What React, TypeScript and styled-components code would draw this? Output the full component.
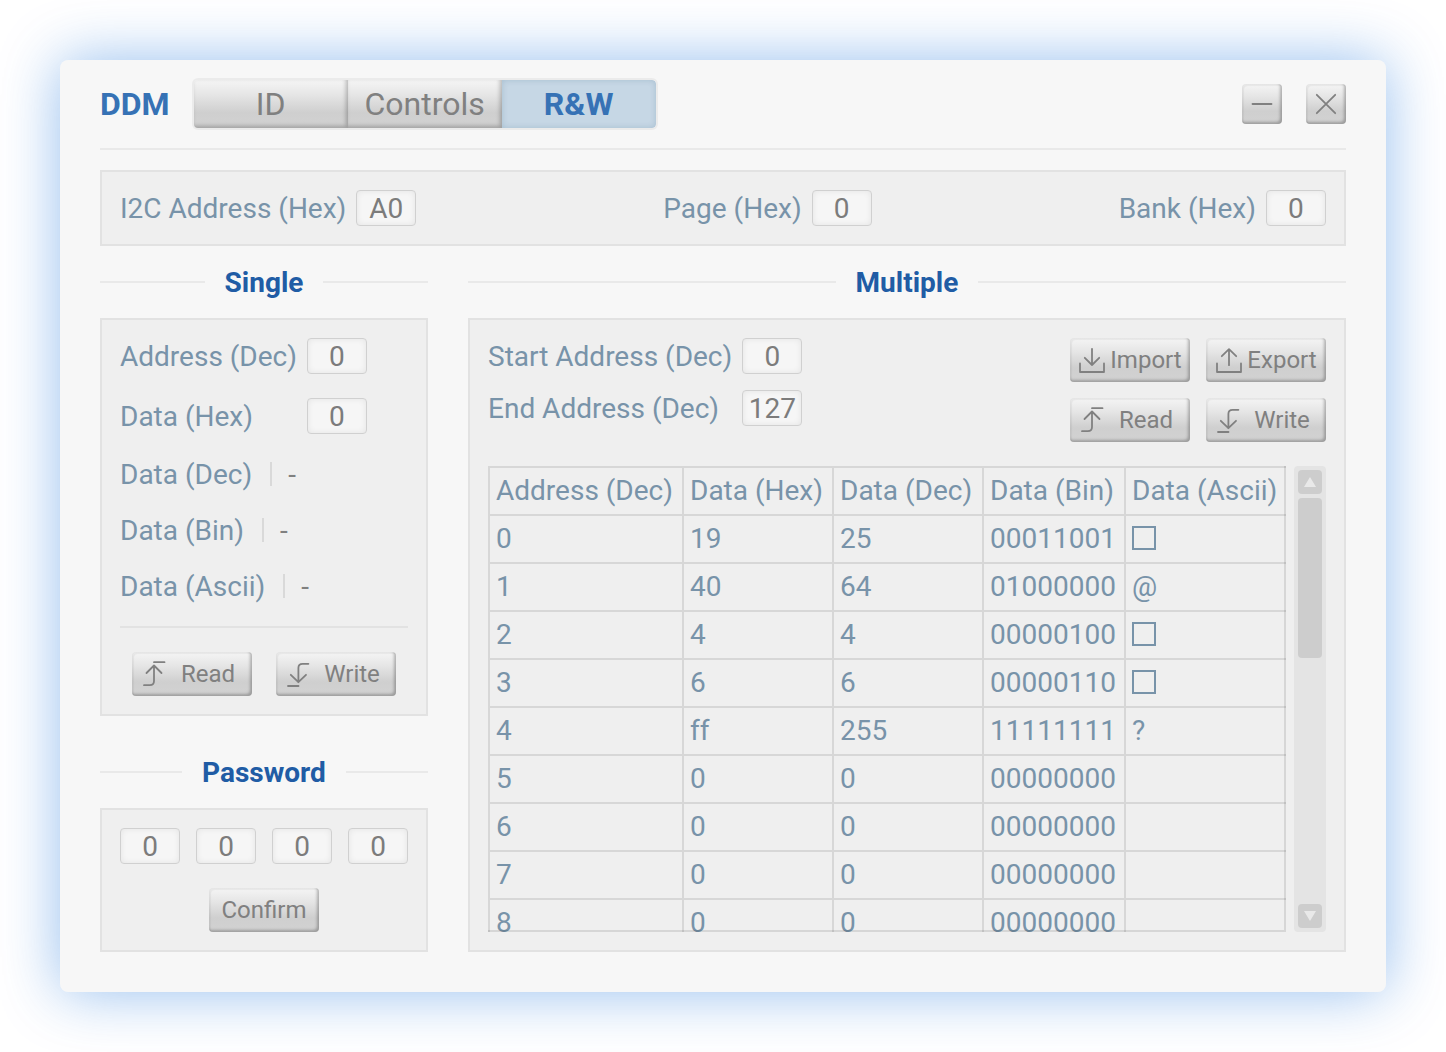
import React, { useId, useRef } from "react";
import styled, { createGlobalStyle } from "styled-components";

const color = {
  window: "#f7f7f7",
  panel: "#efefef",
  panelLine: "#e2e2e2",
  rule: "#e9e9e9",
  label: "#7893a9",
  value: "#808080",
  brand: "#3672b5",
  heading: "#205ca5",
};

const GlobalStyle = createGlobalStyle`
  * { box-sizing: border-box; }
  body {
    margin: 0;
    background: #fff;
    font-family: Roboto, "Liberation Sans", sans-serif;
    font-size: 28px;
    line-height: 33px;
    color: ${color.label};
  }
  button, input { font: inherit; margin: 0; }
`;

const Window = styled.main`
  margin: 60px;
  padding: 0 40px 40px;
  min-width: 1180px;
  border-radius: 8px;
  background: ${color.window};
  box-shadow: 0 0 60px rgba(0, 100, 215, 0.42);
`;

const Header = styled.header`
  display: flex;
  align-items: center;
  height: 90px;
  border-bottom: 2px solid ${color.rule};
`;

const Brand = styled.h1`
  margin: 0 22px 0 0;
  font-size: 32px;
  line-height: 32px;
  font-weight: 700;
  color: ${color.brand};
`;

const Tabs = styled.nav`
  display: flex;
  border: 2px solid #ebebeb;
  border-radius: 6px;
  overflow: hidden;
`;

const raised = `
  background: linear-gradient(#f5f5f5, #e6e6e6 30%, #cfcfcf 68%, #d2d2d2);
`;

const Tab = styled.button<{ $active?: boolean }>`
  width: 154px;
  height: 48px;
  padding: 0;
  border: 0;
  font-size: 32px;
  line-height: 32px;
  color: ${color.value};
  ${raised}
  box-shadow: inset -2px -2px 4px rgba(0, 0, 0, 0.25);
  ${(p) =>
    p.$active &&
    `
    border-radius: 0 4px 4px 0;
    background: #c6d7e5;
    color: ${color.brand};
    font-weight: 700;
    box-shadow: inset 0 0 6px rgba(0, 60, 100, 0.16);
  `}
`;

const WindowActions = styled.div`
  display: flex;
  gap: 24px;
  margin-left: auto;
`;

const PushButton = styled.button`
  height: 44px;
  padding: 0 12px;
  border: 0;
  border-radius: 4px;
  font-size: 24px;
  line-height: 32px;
  color: ${color.value};
  ${raised}
  box-shadow: inset -2px -2px 3px rgba(0, 0, 0, 0.26), inset 2px 2px 1px rgba(0, 0, 0, 0.05);
`;

const SquareButton = styled(PushButton)`
  display: grid;
  place-items: center;
  width: 40px;
  height: 40px;
  padding: 0;
`;

const IconPushButton = styled(PushButton)`
  display: flex;
  align-items: center;
  width: 120px;
  padding: 0 4px 0 8px;
  span {
    flex: 1;
    text-align: center;
  }
`;

const Icon = styled.svg`
  flex: none;
  display: block;
  fill: none;
  stroke: currentColor;
  stroke-width: 1.8;
  stroke-linecap: round;
  stroke-linejoin: round;
`;

const Panel = styled.section`
  padding: 18px;
  border: 2px solid ${color.panelLine};
  background: ${color.panel};
`;

const TargetBar = styled(Panel)`
  display: flex;
  justify-content: space-between;
  margin-top: 20px;
`;

const Columns = styled.div`
  display: grid;
  grid-template-columns: 328px 1fr;
  column-gap: 40px;
`;

const Column = styled.div`
  display: flex;
  flex-direction: column;
`;

const Heading = styled.h2`
  display: flex;
  align-items: center;
  gap: 20px;
  height: 72px;
  margin: 0;
  font-size: 28px;
  font-weight: 700;
  color: ${color.heading};
  &::before,
  &::after {
    content: "";
    flex: 1;
    height: 2px;
    background: ${color.rule};
  }
`;

const PasswordHeading = styled(Heading)`
  margin-top: 20px;
`;

const Stack = styled(Panel)`
  display: flex;
  flex-direction: column;
  gap: 24px;
`;

const FieldRow = styled.div`
  display: flex;
  align-items: center;
  gap: 10px;
`;

const FieldGrid = styled.div<{ $gap: number }>`
  display: grid;
  grid-template-columns: max-content 60px;
  align-items: center;
  align-content: start;
  column-gap: 10px;
  row-gap: ${(p) => p.$gap}px;
`;

const Input = styled.input`
  width: 60px;
  height: 36px;
  padding: 0;
  border: 1px solid #d0d0d0;
  border-radius: 4px;
  background: #f6f6f6;
  box-shadow: inset 0 0 6px rgba(0, 0, 0, 0.08);
  color: #7c7c7c;
  text-align: center;
`;

const Readout = styled.div`
  display: flex;
  align-items: center;
  height: 32px;
`;

const ReadoutValue = styled.output`
  display: flex;
  align-items: center;
  gap: 16px;
  margin-left: 18px;
  color: ${color.value};
  &::before {
    content: "";
    width: 2px;
    height: 24px;
    background: #d9d9d9;
  }
`;

const Divider = styled.hr`
  width: 100%;
  height: 2px;
  margin: 0;
  border: 0;
  background: ${color.panelLine};
`;

const ButtonRow = styled.div`
  display: flex;
  justify-content: center;
  gap: 24px;
`;

const PasswordRow = styled.div`
  display: flex;
  justify-content: space-between;
`;

const RangeRow = styled.div`
  display: flex;
  justify-content: space-between;
`;

const ButtonGrid = styled.div`
  display: grid;
  grid-template-columns: auto auto;
  gap: 16px;
`;

const TableArea = styled.div`
  display: flex;
  gap: 8px;
  height: 466px;
`;

const TableFrame = styled.div`
  position: relative;
  flex: 1;
  min-width: 0;
  &::after {
    content: "";
    position: absolute;
    inset: 0;
    border: solid rgba(0, 0, 0, 0.1);
    border-width: 0 2px 2px 0;
    pointer-events: none;
  }
`;

const Scroller = styled.div`
  height: 100%;
  overflow: hidden;
`;

const DataTable = styled.table`
  width: 100%;
  table-layout: fixed;
  border-collapse: separate;
  border-spacing: 0;
  line-height: 32px;
  th,
  td {
    height: 48px;
    padding: 0 0 0 6px;
    border: solid #d7d7d7;
    border-width: 2px 0 0 2px;
    font-weight: 400;
    text-align: left;
    white-space: nowrap;
  }
`;

const Col = styled.col<{ $w?: number }>`
  width: ${(p) => (p.$w ? `${p.$w}px` : "auto")};
`;

const EmptyGlyph = styled.span`
  display: block;
  width: 24px;
  height: 24px;
  margin-bottom: 2px;
  border: 2px solid ${color.label};
`;

const ScrollTrack = styled.div`
  display: flex;
  flex-direction: column;
  gap: 4px;
  width: 32px;
  padding: 4px;
  border-radius: 4px;
  background: #e4e4e4;
`;

const ScrollButton = styled.button`
  display: grid;
  place-items: center;
  width: 24px;
  height: 24px;
  padding: 0;
  border: 0;
  border-radius: 4px;
  background: #cdcdcd;
  &:last-child {
    margin-top: auto;
  }
`;

const ScrollThumb = styled.div`
  height: 160px;
  border-radius: 4px;
  background: #cdcdcd;
`;

const Arrow = styled.svg`
  display: block;
  fill: #e9e9e9;
`;

const ReadIcon = () => (
  <Icon width="28" height="28" viewBox="0 0 28 28" aria-hidden="true">
    <path d="M14 2.2H24.5M6.5 13L14 5.5L21.5 13M14 5.5V21Q14 25.2 9.8 25.2H4" />
  </Icon>
);

const WriteIcon = () => (
  <Icon width="28" height="28" viewBox="0 0 28 28" aria-hidden="true">
    <path d="M4 26H14.5M6.8 14.8L14.4 22.2L22 14.8M14.4 22.2V8Q14.4 3.8 18.6 3.8H24.4" />
  </Icon>
);

const ImportIcon = () => (
  <Icon width="28" height="28" viewBox="0 0 28 28" aria-hidden="true">
    <path d="M2 17.5V26H26V17.5M14 2.8V19M6.8 11.8L14 19L21.2 11.8" />
  </Icon>
);

const ExportIcon = () => (
  <Icon width="28" height="28" viewBox="0 0 28 28" aria-hidden="true">
    <path d="M3 17.5V26H27V17.5M15 3.2V19.2M7.8 10.2L15 3.2L22.2 10.2" />
  </Icon>
);

function Field({ label, value }: { label: string; value: string }) {
  const id = useId();
  return (
    <>
      <label htmlFor={id}>{label}</label>
      <Input id={id} defaultValue={value} />
    </>
  );
}

function ReadWriteButtons() {
  return (
    <>
      <IconPushButton type="button">
        <ReadIcon />
        <span>Read</span>
      </IconPushButton>
      <IconPushButton type="button">
        <WriteIcon />
        <span>Write</span>
      </IconPushButton>
    </>
  );
}

const columns = [
  { title: "Address (Dec)", width: 194 },
  { title: "Data (Hex)", width: 150 },
  { title: "Data (Dec)", width: 150 },
  { title: "Data (Bin)", width: 142 },
  { title: "Data (Ascii)" },
];

const bytes = [0x19, 0x40, 0x04, 0x06, 0xff, 0, 0, 0, 0];

function ascii(byte: number): React.ReactNode {
  if (byte === 0) return null;
  if (byte < 32) return <EmptyGlyph />;
  return byte > 126 ? "?" : String.fromCharCode(byte);
}

function MemoryTable() {
  const scroller = useRef<HTMLDivElement>(null);
  const scroll = (by: number) => scroller.current?.scrollBy({ top: by });
  return (
    <TableArea>
      <TableFrame>
        <Scroller ref={scroller}>
          <DataTable>
            <colgroup>
              {columns.map((c) => (
                <Col key={c.title} $w={c.width} />
              ))}
            </colgroup>
            <thead>
              <tr>
                {columns.map((c) => (
                  <th key={c.title} scope="col">{c.title}</th>
                ))}
              </tr>
            </thead>
            <tbody>
              {bytes.map((byte, address) => (
                <tr key={address}>
                  <td>{address}</td>
                  <td>{byte.toString(16)}</td>
                  <td>{byte}</td>
                  <td>{byte.toString(2).padStart(8, "0")}</td>
                  <td>{ascii(byte)}</td>
                </tr>
              ))}
            </tbody>
          </DataTable>
        </Scroller>
      </TableFrame>
      <ScrollTrack>
        <ScrollButton type="button" aria-label="Scroll up" onClick={() => scroll(-48)}>
          <Arrow width="12" height="10" viewBox="0 0 12 10">
            <path d="M6 0L12 10H0Z" />
          </Arrow>
        </ScrollButton>
        <ScrollThumb />
        <ScrollButton type="button" aria-label="Scroll down" onClick={() => scroll(48)}>
          <Arrow width="12" height="10" viewBox="0 0 12 10">
            <path d="M0 0H12L6 10Z" />
          </Arrow>
        </ScrollButton>
      </ScrollTrack>
    </TableArea>
  );
}

const readouts = ["Data (Dec)", "Data (Bin)", "Data (Ascii)"];

export default function App() {
  return (
    <>
      <GlobalStyle />
      <Window>
        <Header>
          <Brand>DDM</Brand>
          <Tabs>
            <Tab type="button">ID</Tab>
            <Tab type="button">Controls</Tab>
            <Tab type="button" $active aria-current="page">R&amp;W</Tab>
          </Tabs>
          <WindowActions>
            <SquareButton type="button" aria-label="Minimize">
              <Icon width="24" height="24" viewBox="0 0 24 24">
                <path d="M2.5 12H21.5" />
              </Icon>
            </SquareButton>
            <SquareButton type="button" aria-label="Close">
              <Icon width="24" height="24" viewBox="0 0 24 24">
                <path d="M2.8 2.8L21.2 21.2M21.2 2.8L2.8 21.2" />
              </Icon>
            </SquareButton>
          </WindowActions>
        </Header>

        <TargetBar>
          <FieldRow><Field label="I2C Address (Hex)" value="A0" /></FieldRow>
          <FieldRow><Field label="Page (Hex)" value="0" /></FieldRow>
          <FieldRow><Field label="Bank (Hex)" value="0" /></FieldRow>
        </TargetBar>

        <Columns>
          <Column>
            <Heading>Single</Heading>
            <Stack>
              <FieldGrid $gap={24}>
                <Field label="Address (Dec)" value="0" />
                <Field label="Data (Hex)" value="0" />
              </FieldGrid>
              {readouts.map((label) => (
                <Readout key={label}>
                  <span>{label}</span>
                  <ReadoutValue>-</ReadoutValue>
                </Readout>
              ))}
              <Divider />
              <ButtonRow>
                <ReadWriteButtons />
              </ButtonRow>
            </Stack>

            <PasswordHeading>Password</PasswordHeading>
            <Stack>
              <PasswordRow>
                {[1, 2, 3, 4].map((n) => (
                  <Input key={n} aria-label={`Password byte ${n}`} defaultValue="0" />
                ))}
              </PasswordRow>
              <ButtonRow>
                <PushButton type="button">Confirm</PushButton>
              </ButtonRow>
            </Stack>
          </Column>

          <Column>
            <Heading>Multiple</Heading>
            <Stack>
              <RangeRow>
                <FieldGrid $gap={16}>
                  <Field label="Start Address (Dec)" value="0" />
                  <Field label="End Address (Dec)" value="127" />
                </FieldGrid>
                <ButtonGrid>
                  <IconPushButton type="button">
                    <ImportIcon />
                    <span>Import</span>
                  </IconPushButton>
                  <IconPushButton type="button">
                    <ExportIcon />
                    <span>Export</span>
                  </IconPushButton>
                  <ReadWriteButtons />
                </ButtonGrid>
              </RangeRow>
              <MemoryTable />
            </Stack>
          </Column>
        </Columns>
      </Window>
    </>
  );
}
